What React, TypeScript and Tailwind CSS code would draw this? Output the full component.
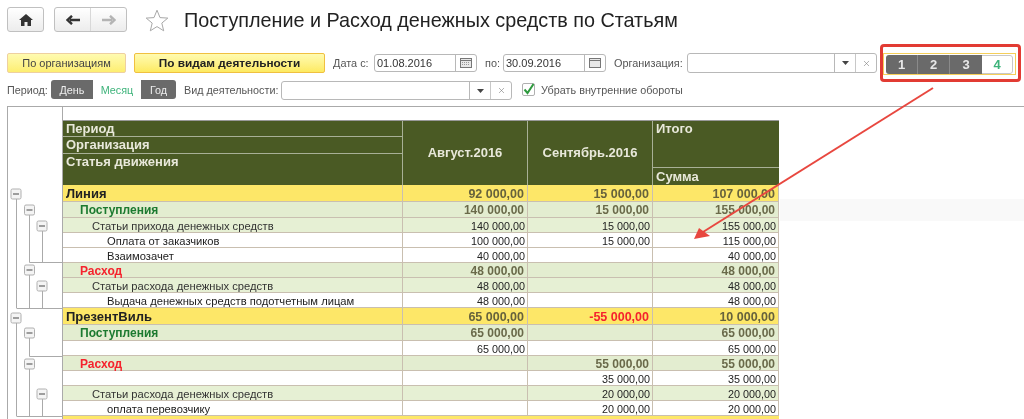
import { X } from "lucide-react";

type Row = {
  h: string;
  kind: "org" | "group" | "sub" | "leaf";
  label: string;
  color?: string;
  indent: string;
  a?: string;
  b?: string;
  bRed?: boolean;
  c?: string;
};

const rows: Row[] = [
  { h: "h-[17px]", kind: "org", label: "Линия", indent: "pl-[3px]", a: "92 000,00", b: "15 000,00", c: "107 000,00" },
  { h: "h-[16px]", kind: "group", label: "Поступления", color: "text-[#1c7a30]", indent: "pl-[17px]", a: "140 000,00", b: "15 000,00", c: "155 000,00" },
  { h: "h-[15px]", kind: "sub", label: "Статьи прихода денежных средств", indent: "pl-[29px]", a: "140 000,00", b: "15 000,00", c: "155 000,00" },
  { h: "h-[15px]", kind: "leaf", label: "Оплата от заказчиков", indent: "pl-[44px]", a: "100 000,00", b: "15 000,00", c: "115 000,00" },
  { h: "h-[15px]", kind: "leaf", label: "Взаимозачет", indent: "pl-[44px]", a: "40 000,00", c: "40 000,00" },
  { h: "h-[15px]", kind: "group", label: "Расход", color: "text-[#f5222d]", indent: "pl-[17px]", a: "48 000,00", c: "48 000,00" },
  { h: "h-[15px]", kind: "sub", label: "Статьи расхода денежных средств", indent: "pl-[29px]", a: "48 000,00", c: "48 000,00" },
  { h: "h-[15px]", kind: "leaf", label: "Выдача денежных средств подотчетным лицам", indent: "pl-[44px]", a: "48 000,00", c: "48 000,00" },
  { h: "h-[17px]", kind: "org", label: "ПрезентВиль", indent: "pl-[3px]", a: "65 000,00", b: "-55 000,00", bRed: true, c: "10 000,00" },
  { h: "h-[16px]", kind: "group", label: "Поступления", color: "text-[#1c7a30]", indent: "pl-[17px]", a: "65 000,00", c: "65 000,00" },
  { h: "h-[15px]", kind: "leaf", label: "", indent: "pl-[44px]", a: "65 000,00", c: "65 000,00" },
  { h: "h-[15px]", kind: "group", label: "Расход", color: "text-[#f5222d]", indent: "pl-[17px]", b: "55 000,00", c: "55 000,00" },
  { h: "h-[15px]", kind: "leaf", label: "", indent: "pl-[44px]", b: "35 000,00", c: "35 000,00" },
  { h: "h-[15px]", kind: "sub", label: "Статьи расхода денежных средств", indent: "pl-[29px]", b: "20 000,00", c: "20 000,00" },
  { h: "h-[15px]", kind: "leaf", label: "оплата перевозчику", indent: "pl-[44px]", b: "20 000,00", c: "20 000,00" },
];

const rowBg = {
  org: "bg-[#fde768]",
  group: "bg-[#e3edd0]",
  sub: "bg-[#e6f0d4]",
  leaf: "bg-white",
};

const labelText = {
  org: "text-[13px] leading-[18px] font-bold text-[#222]",
  group: "text-[12px] leading-[16px] font-bold",
  sub: "text-[11.2px] leading-[16px] text-[#333]",
  leaf: "text-[11.2px] leading-[16px] text-[#222]",
};

function Amount({ row, value, red, wide }: { row: Row; value?: string; red?: boolean; wide: string }) {
  const bold = row.kind === "org" || row.kind === "group";
  const tone = red
    ? "text-[12.5px] leading-[18px] font-bold text-[#f5222d] pr-[3px]"
    : row.kind === "org"
      ? "text-[12.5px] leading-[18px] font-bold text-[#66623c] pr-[3px]"
      : bold
        ? "text-[12px] leading-[16px] font-bold text-[#6a6a4a] pr-[3px]"
        : "text-[10.8px] leading-[16px] text-[#222] pr-[2px]";
  return (
    <div className={`${wide} box-border border-r border-[#c9bfb0] text-right whitespace-nowrap ${tone}`}>
      {value}
    </div>
  );
}

function DataRow({ row }: { row: Row }) {
  return (
    <div className={`flex ${row.h} box-border border-b border-[#c9bfb0] ${rowBg[row.kind]}`}>
      <div className={`w-[340px] box-border border-r border-[#c9bfb0] whitespace-nowrap ${row.indent} ${labelText[row.kind]} ${row.color ?? ""}`}>
        {row.label}
      </div>
      <Amount row={row} value={row.a} wide="w-[125px]" />
      <Amount row={row} value={row.b} red={row.bRed} wide="w-[125px]" />
      <Amount row={row} value={row.c} wide="w-[126px]" />
    </div>
  );
}

function TreeBox({ x, y }: { x: number; y: number }) {
  return (
    <g>
      <rect x={x - 5} y={y - 5} width="10" height="10" rx="1.5" fill="#f4f4f4" stroke="#b0b0b0" />
      <path d={`M${x - 3} ${y}H${x + 3}`} stroke="#777" strokeWidth="1.4" />
    </g>
  );
}

// tree gutter, drawn in page coordinates
function Tree() {
  const boxes = [
    [16, 194], [29.5, 210], [42, 226], [29.5, 270], [42, 286],
    [16, 318], [29.5, 333], [29.5, 364], [42, 394],
  ];
  const lines = [
    "M16.5 199V308", "M29.5 215V262.5H62", "M42.5 231V262.5", "M29.5 275V308", "M42.5 291V308",
    "M16.5 308.5H62", "M16.5 323V416", "M29.5 338V356.5H62", "M29.5 369V416", "M42.5 399V416", "M16.5 416.5H62",
  ];
  return (
    <svg width="62" height="312" viewBox="0 107 62 312" className="shrink-0 -ml-[8px] relative">
      {lines.map((d) => (
        <path key={d} d={d} fill="none" stroke="#aaaaaa" strokeWidth="1" />
      ))}
      {boxes.map(([x, y]) => (
        <TreeBox key={`${x}-${y}`} x={x} y={y} />
      ))}
    </svg>
  );
}

function Input({ w, extra, children }: { w: string; extra?: string; children?: React.ReactNode }) {
  return (
    <div className={`${w} ${extra ?? "h-[19px]"} box-border flex items-center border border-[#b8b8b8] rounded-[3px] bg-white text-[10.8px] text-[#333] overflow-hidden`}>
      {children}
    </div>
  );
}

function ComboButtons() {
  return (
    <>
      <div className="flex-1" />
      <div className="w-[21px] h-full box-border border-l border-[#b8b8b8] flex items-center justify-center">
        <svg width="7" height="4" viewBox="0 0 7 4">
          <path d="M0 0H7L3.5 4Z" fill="#444" />
        </svg>
      </div>
      <div className="w-[21px] h-full box-border border-l border-[#c8c8c8] flex items-center justify-center">
        <X size={9} className="text-[#777]" strokeWidth={1.5} />
      </div>
    </>
  );
}

function CalendarIcon({ grid }: { grid?: boolean }) {
  return (
    <div className="w-[21px] h-full box-border border-l border-[#b8b8b8] flex items-center justify-center">
      <svg width="12" height="10" viewBox="0 0 12 10">
        <rect x="0.5" y="0.5" width="11" height="9" fill="#e8e8e8" stroke="#777" />
        <path d="M1 2.5H11" stroke="#777" />
        {grid && <path d="M2 4.5H10M2 6.5H10" stroke="#999" strokeDasharray="1 1" />}
      </svg>
    </div>
  );
}

function DateField({ value, grid }: { value: string; grid?: boolean }) {
  return (
    <Input w="w-[103px]" extra="h-[18px] mt-px">
      <span className="pl-[2px] flex-1 text-[11px] leading-[18px]">{value}</span>
      <CalendarIcon grid={grid} />
    </Input>
  );
}

const btn = "h-[25px] box-border border border-[#c0c0c0] rounded-[3px] bg-gradient-to-b from-white to-[#ececec] flex items-center justify-center";

export default function App() {
  return (
    <div className="relative w-[1024px] h-[419px] overflow-hidden bg-white font-['Liberation_Sans',Arial,sans-serif] blur-[0.3px]">
      {/* top bar */}
      <div className="h-[53px] pl-[7px] pt-[7px] flex items-start">
        <div className={`${btn} w-[37px]`}>
          <svg width="14" height="12" viewBox="0 0 14 12">
            <path d="M7 0L0 6H2V12H5.5V8H8.5V12H12V6H14Z" fill="#333" />
          </svg>
        </div>
        <div className={`${btn} w-[73px] ml-[10px]`}>
          <div className="w-[37px] h-full flex items-center justify-center border-r border-[#d8d8d8]">
            <svg width="14" height="10" viewBox="0 0 14 10">
              <path d="M14 5H4M6 0.8L1.5 5L6 9.2" fill="none" stroke="#333" strokeWidth="2.4" />
            </svg>
          </div>
          <div className="w-[36px] h-full flex items-center justify-center">
            <svg width="14" height="10" viewBox="0 0 14 10">
              <path d="M0 5H10M8 0.8L12.5 5L8 9.2" fill="none" stroke="#b4b4b4" strokeWidth="2.4" />
            </svg>
          </div>
        </div>
        <svg width="24" height="23" viewBox="0 0 24 23" className="ml-[18px] mt-[2px]">
          <path d="M12 1.2L15 8.6L22.8 9.1L16.8 14.1L18.7 21.8L12 17.6L5.3 21.8L7.2 14.1L1.2 9.1L9 8.6Z" fill="white" stroke="#a8a8a8" strokeWidth="1" />
        </svg>
        <div className="ml-[15px] mt-[1px] text-[19.8px] leading-[24px] text-[#222] whitespace-nowrap">
          Поступление и Расход денежных средств по Статьям
        </div>
      </div>

      {/* first filter row */}
      <div className="h-[27px] pl-[7px] flex items-start text-[10.9px] text-[#555]">
        <div className="w-[119px] h-[20px] box-border border border-[#eed0a0] rounded-[2px] bg-gradient-to-b from-[#fffbb0] to-[#fdee70] flex items-center justify-center text-[#444] text-[11px]">
          По организациям
        </div>
        <div className="w-[191px] h-[20px] ml-[8px] pt-px box-border border border-[#f0c040] rounded-[2px] bg-gradient-to-b from-[#fffbb0] to-[#fdea60] flex items-center justify-center font-bold text-[#222] text-[11.8px]">
          По видам деятельности
        </div>
        <span className="ml-[8px] w-[41px] leading-[20px]">Дата с:</span>
        <DateField value="01.08.2016" grid />
        <span className="ml-[8px] w-[18px] leading-[20px]">по:</span>
        <DateField value="30.09.2016" />
        <span className="ml-[8px] w-[73px] leading-[20px] whitespace-nowrap">Организация:</span>
        <Input w="w-[190px]" extra="h-[20px]">
          <ComboButtons />
        </Input>
        <div className="ml-[6px] w-[133px] h-[22px] box-border border border-[#f5cf5a] flex items-center justify-center">
          <div className="w-[127px] h-[19px] rounded-[3px] overflow-hidden flex text-[13px] font-bold leading-[19px] text-center text-[#e8e8e8]">
            <div className="w-[32px] bg-[#6a6a6a] border-r border-[#8a8a8a]">1</div>
            <div className="w-[32px] bg-[#6a6a6a] border-r border-[#8a8a8a]">2</div>
            <div className="w-[32px] bg-[#6a6a6a]">3</div>
            <div className="w-[31px] bg-white text-[#3db37a] box-border border border-l-0 border-[#c8c8c8] rounded-r-[3px] leading-[17px]">4</div>
          </div>
        </div>
      </div>

      {/* second filter row */}
      <div className="h-[26px] pl-[7px] flex items-start text-[10.8px] text-[#555]">
        <span className="w-[44px] leading-[21px]">Период:</span>
        <div className="w-[125px] h-[19px] rounded-[3px] overflow-hidden flex leading-[21px] text-center">
          <div className="w-[42px] bg-[#6a6a6a] text-[#eee]">День</div>
          <div className="w-[48px] bg-white text-[#3db37a]">Месяц</div>
          <div className="w-[35px] bg-[#6a6a6a] text-[#eee]">Год</div>
        </div>
        <span className="ml-[8px] w-[97px] leading-[21px] whitespace-nowrap">Вид деятельности:</span>
        <Input w="w-[231px]" extra="h-[19px] mt-px">
          <ComboButtons />
        </Input>
        <div className="ml-[10px] mt-[3px] w-[13px] h-[13px] box-border border border-[#b0b0b0] rounded-[2px] bg-white flex items-center justify-center">
          <svg width="13" height="13" viewBox="0 0 13 13" className="overflow-visible">
            <path d="M2.5 6.5L5.5 10L11.5 1" fill="none" stroke="#2e9a3e" strokeWidth="2" />
          </svg>
        </div>
        <span className="ml-[6px] leading-[21px] whitespace-nowrap">Убрать внутренние обороты</span>
      </div>

      {/* report panel */}
      <div className="ml-[7px] h-[313px] box-border border-t border-l border-[#aaaaaa] flex relative">
        <div className="absolute left-[772px] right-0 top-[92px] h-[22px] bg-[#f9f9f9]" />
        <Tree />
        <div className="relative w-[717px] h-[312px] box-border border-l border-[#aaaaaa] pt-[13px]">
          {/* header */}
          <div className="grid grid-cols-[340px_125px_125px_126px] grid-rows-[16px_17px_14px_17px] w-[716px] h-[65px] box-border border-t border-[#999] bg-[#4a5a24] text-[13px] font-bold text-[#e8e8da]">
            <div className="row-start-1 col-start-1 box-border border-b border-r border-[#a8b096] pl-[3px] leading-[15px]">Период</div>
            <div className="row-start-2 col-start-1 box-border border-b border-r border-[#a8b096] pl-[3px] leading-[15px]">Организация</div>
            <div className="row-start-3 row-span-2 col-start-1 box-border border-r border-[#a8b096] pl-[3px] leading-[15px]">Статья движения</div>
            <div className="row-start-1 row-span-4 col-start-2 box-border border-r border-[#a8b096] flex items-center justify-center">Август.2016</div>
            <div className="row-start-1 row-span-4 col-start-3 box-border border-r border-[#a8b096] flex items-center justify-center">Сентябрь.2016</div>
            <div className="row-start-1 row-span-3 col-start-4 box-border border-b border-[#a8b096] pl-[3px] leading-[15px]">Итого</div>
            <div className="row-start-4 col-start-4 pl-[3px] leading-[18px]">Сумма</div>
          </div>
          {/* body */}
          {rows.map((row, i) => (
            <DataRow key={i} row={row} />
          ))}
          <div className="h-[3px] bg-[#fde768]" />
        </div>
      </div>

      {/* annotation */}
      <div className="absolute left-[880px] top-[44px] w-[141px] h-[38px] box-border border-[3px] border-[#e23b33] rounded-[4px]" />
      <svg width="1024" height="419" className="absolute left-0 top-0 pointer-events-none">
        <path d="M933 88L703 232" stroke="#e8473f" strokeWidth="2" fill="none" />
        <path d="M694 239L699 228L710 236Z" fill="#e8473f" />
      </svg>
    </div>
  );
}
